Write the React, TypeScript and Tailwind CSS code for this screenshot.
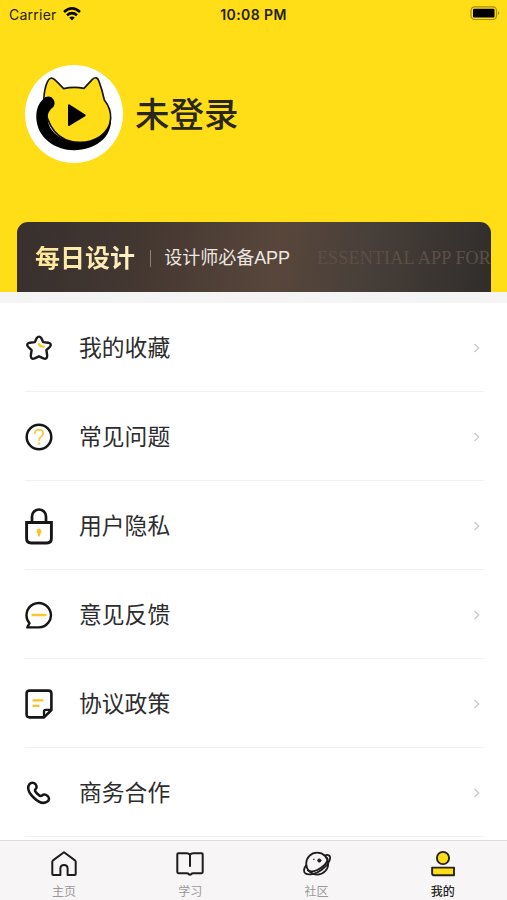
import type { ReactNode } from "react"

type Row = {
    label: string
    icon: ReactNode
}

type Tab = {
    label: string
    icon: ReactNode
    active?: boolean
}

const rows: Row[] = [
    { label: "我的收藏", icon: <StarIcon /> },
    { label: "常见问题", icon: <QuestionIcon /> },
    { label: "用户隐私", icon: <LockIcon /> },
    { label: "意见反馈", icon: <FeedbackIcon /> },
    { label: "协议政策", icon: <NoteIcon /> },
    { label: "商务合作", icon: <PhoneIcon /> }
]

const tabs: Tab[] = [
    { label: "主页", icon: <HomeIcon /> },
    { label: "学习", icon: <BookIcon /> },
    { label: "社区", icon: <PlanetIcon /> },
    { label: "我的", icon: <UserIcon />, active: true }
]

function StarIcon() {
    return (
        <svg width="28" height="28" viewBox="0 0 28 28" fill="none" strokeLinejoin="round" strokeLinecap="round">
            <path
                d="M11.6 4.3Q14 .9 16.4 4.3L18.1 8.1L23.2 8.7Q27.6 9.7 24.7 13L21.4 16.2L22.2 21.5Q22.2 25.8 18.4 24.3L14 22.3L9.6 24.3Q5.8 25.8 5.8 21.5L6.6 16.2L3.3 13Q.4 9.7 4.8 8.7L9.9 8.1Z"
                stroke="#1b1b1b"
                strokeWidth="2.4"
            />
            <path d="M13.8 10Q15.2 13 18.8 12.6" stroke="#ffc921" strokeWidth="2.3" />
        </svg>
    )
}

function QuestionIcon() {
    return (
        <svg width="28" height="28" viewBox="0 0 28 28" fill="none" strokeLinecap="round">
            <circle cx="14" cy="14" r="12.3" stroke="#161616" strokeWidth="2.5" />
            <path d="M9.8 10.5Q10.1 6.7 14 6.7Q18.2 6.9 18.2 10.5Q18.2 12.4 15.7 14Q14 15.3 14 17.3" stroke="#ffc83a" strokeWidth="1.7" />
            <circle cx="14" cy="20.6" r="1.2" fill="#ffc83a" />
        </svg>
    )
}

function LockIcon() {
    return (
        <svg width="28" height="38" viewBox="0 0 28 38" fill="none">
            <path d="M7 15V9.5A7 7 0 0 1 21 9.5V15" stroke="#161616" strokeWidth="2.7" />
            <path d="M1.6 15.5H26.4V31.5Q26.4 36 21.9 36H6.1Q1.6 36 1.6 31.5Z" stroke="#161616" strokeWidth="2.9" />
            <path d="M14 21.8A2.6 2.6 0 0 1 15.4 26.5L14.7 29.5H13.3L12.6 26.5A2.6 2.6 0 0 1 14 21.8Z" fill="#ffc31d" />
        </svg>
    )
}

function FeedbackIcon() {
    return (
        <svg width="28" height="28" viewBox="0 0 28 28" fill="none" strokeLinejoin="round">
            <path d="M14 26.4H2.3L4.5 22.2A12.2 12.2 0 1 1 14 26.4Z" stroke="#161616" strokeWidth="2.4" />
            <path d="M7.5 14H20.5" stroke="#ffc62b" strokeWidth="2.3" strokeLinecap="round" />
        </svg>
    )
}

function NoteIcon() {
    return (
        <svg width="28" height="30" viewBox="0 0 28 30" fill="none" strokeLinejoin="round">
            <path d="M19 28.4H4.5Q1.6 28.4 1.6 25.5V4.5Q1.6 1.6 4.5 1.6H23.5Q26.4 1.6 26.4 4.5V21Z" stroke="#161616" strokeWidth="2.6" />
            <path d="M19 27.5V22.5Q19 20.8 20.7 20.8H26" stroke="#161616" strokeWidth="2.3" />
            <path d="M7.5 11.3H18.5M7.5 16.8H14.5" stroke="#ffc31d" strokeWidth="2.3" />
        </svg>
    )
}

function PhoneIcon() {
    return (
        <svg width="28" height="28" viewBox="0 0 28 28" fill="none" strokeLinejoin="round">
            <path
                d="M4.4 5.2C5.9 3.3 8.8 3.2 10.4 5.1C12 7.2 11.8 8.9 10.6 10.1C9.4 11.3 10 12.5 12 14.5C14 16.5 15.6 17.7 16.9 16.5C18.4 15.2 20.8 15.3 22.7 17.1C24.6 18.9 24.2 21.3 22.4 22.5C18.4 25.3 12.9 22.8 8.6 18.5C4.3 14.2 1.7 9 4.4 5.2Z"
                stroke="#161616"
                strokeWidth="2.5"
            />
        </svg>
    )
}

function HomeIcon() {
    return (
        <svg width="28" height="28" viewBox="0 0 28 28" fill="none" strokeLinejoin="round">
            <path
                d="M2.3 12Q2.3 11 3 10.4L14 2.3L25 10.4Q25.7 11 25.7 12V24.1Q25.7 25 24.8 25H17.6V18.5Q17.6 14.9 14 14.9Q10.4 14.9 10.4 18.5V25H3.2Q2.3 25 2.3 24.1Z"
                stroke="#1d1d1d"
                strokeWidth="2"
            />
        </svg>
    )
}

function BookIcon() {
    return (
        <svg width="28" height="28" viewBox="0 0 28 28" fill="none" strokeLinejoin="round">
            <path
                d="M14 16V4.8Q12.8 3.2 10.8 3.2H2.4Q1.3 3.2 1.3 4.3V22.1Q1.3 23.2 2.4 23.2H11Q12.2 23.2 12.6 24.1Q14 25.2 15.4 24.1Q15.8 23.2 17 23.2H25.6Q26.7 23.2 26.7 22.1V4.3Q26.7 3.2 25.6 3.2H17.2Q15.2 3.2 14 4.8"
                stroke="#1d1d1d"
                strokeWidth="2"
                strokeLinecap="round"
            />
        </svg>
    )
}

function PlanetIcon() {
    return (
        <svg width="28" height="28" viewBox="0 0 28 28" fill="none" stroke="#1d1d1d" strokeWidth="1.8" strokeLinecap="round">
            <circle cx="14.2" cy="13.7" r="11" />
            <path d="M21.8 5.3C25 4.3 27.6 5.5 27.1 8.5C26.7 12 23.5 16.2 18.8 19.8C13.2 24 5.2 25.7 2.2 23.2C.2 21.4 1 17.7 3.2 15.4" />
            <path d="M23.4 7.6Q25.3 8.7 24 11.5C22.2 15.3 18.6 18 14.2 20C10.2 21.9 7.2 22.2 4.8 20.2" />
            <circle cx="16.3" cy="10.5" r="1.6" fill="#1d1d1d" strokeWidth="1" />
            <circle cx="10.8" cy="9.3" r=".4" fill="#1d1d1d" strokeWidth=".5" />
        </svg>
    )
}

function UserIcon() {
    return (
        <svg width="28" height="28" viewBox="0 0 28 28" fill="#ffdd17" stroke="#252318" strokeWidth="1.9" strokeLinejoin="round">
            <circle cx="14" cy="8" r="6.1" />
            <path d="M3.1 17.6H25V25.2H4.8Q3.1 25.2 3.1 23.5Z" />
        </svg>
    )
}

function CatLogo() {
    return (
        <svg width="98" height="98" viewBox="30 16 294 294" strokeLinejoin="round">
            <circle cx="177" cy="163" r="147" fill="#fff" />
            <path
                d="M86 122Q88 84 98 65Q106 49 119 60Q132 72 146 87Q176 80 207 86L232 59Q246 47 252 65Q261 88 268 121Q288 146 287 176C284 225 235 249 192 248C140 247 96 218 86 122Z"
                fill="#ffdd17"
                stroke="#161616"
                strokeWidth="5"
            />
            {/* the tail wraps round the face and ends in a round tip */}
            <path
                d="M86 117C70 130 63 151 64 176C67 236 122 272 177 272C242 271 291 234 288 176C284 225 235 249 192 248C140 246 98 216 98 174Q98 158 110 146A19 19 0 1 0 86 117Z"
                fill="#000"
            />
            <path d="M162 137L209 167L162 196Z" fill="#000" stroke="#000" strokeWidth="6" />
        </svg>
    )
}

function StatusBar() {
    return (
        <div className="grid h-7 grid-cols-3 items-center pl-[9px] pr-[7px] text-[14px] text-[#24210b]">
            <div className="flex items-center gap-[6px] tracking-[0.25px]">
                Carrier
                <svg width="18" height="14" viewBox="0 0 18 14" fill="none" stroke="#090800" strokeWidth="2.6">
                    <path d="M1 4.9Q9-2.1 17 4.9M4 8.2Q9 4 14 8.2" />
                    <path d="M6.2 10.6Q9 8.2 11.8 10.6L9 13.5Z" fill="#090800" stroke="none" />
                </svg>
            </div>

            <div className="-ml-[2px] whitespace-nowrap text-center font-semibold tracking-[0.4px]">
                10:08 PM
            </div>

            <svg className="-mt-[2px] justify-self-end" width="30" height="14" viewBox="0 0 30 14">
                <rect x="1" y=".8" width="25.5" height="12.7" rx="3.7" fill="none" stroke="#a49013" strokeWidth="1.2" />
                <rect x="3" y="2.8" width="21.5" height="8.7" rx="1.2" fill="#000" />
                <path d="M28 5Q30.5 7 28 9Z" fill="#a49013" />
            </svg>
        </div>
    )
}

function Banner() {
    return (
        <div className="ml-[17px] mr-4 mt-auto flex h-[70px] items-center overflow-hidden whitespace-nowrap rounded-t-[11px] bg-[linear-gradient(100deg,#37302e_0%,#433731_25%,#58463b_55%,#49403a_72%,#302d2b_100%)] pl-[18px] pt-[2px]">
            <span className="bg-linear-to-r from-[#ffe796] to-[#fff0c5] bg-clip-text text-[25px] font-bold leading-none text-transparent">
                每日设计
            </span>
            <span className="ml-[15px] h-[17px] w-px bg-[#8c8079]" />
            <span className="ml-[14px] text-[18px] leading-none text-[#eee7e1]">
                设计师必备<span className="font-['Liberation_Sans'] tracking-[-0.1px]">APP</span>
            </span>
            <span className="ml-[27px] font-['Liberation_Serif'] text-[18px] leading-none tracking-[0.2px] text-[#5d4f46]">
                ESSENTIAL APP FOR
            </span>
        </div>
    )
}

export default function App() {
    return (
        <div className="flex h-[900px] w-[507px] flex-col overflow-hidden bg-white font-[Inter,'Noto_Sans_CJK_SC',sans-serif]">
            <header className="flex h-[292px] shrink-0 flex-col bg-[#ffdd17]">
                <StatusBar />
                <div className="mt-[37px] flex items-center gap-3 pl-[25px]">
                    <CatLogo />
                    <h1 className="pt-[3px] text-[34.5px] font-medium leading-none text-[#29261a]">
                        未登录
                    </h1>
                </div>
                <Banner />
            </header>

            <main className="min-h-0 flex-1 overflow-hidden border-t-[11px] border-[#f4f4f4]">
                {rows.map((row) => (
                    <div
                        key={row.label}
                        className="ml-[25px] mr-[23px] flex h-[89px] items-center border-b border-[#f0f0f0] pt-px"
                    >
                        <span className="flex w-7 justify-center">{row.icon}</span>
                        <span className="ml-[26px] flex-1 pt-[2px] text-[22.8px] leading-none text-[#2d2d2d]">
                            {row.label}
                        </span>
                        <svg width="8" height="12" viewBox="0 0 8 12" className="mr-[3px]" fill="none">
                            <path d="M1.5 2L5.7 6L1.5 10" stroke="#c9c9c9" strokeWidth="1.3" />
                        </svg>
                    </div>
                ))}
            </main>

            <nav className="grid h-[60px] shrink-0 grid-cols-4 border-t border-[#dcdcdc] bg-[#f7f5f6] px-px">
                {tabs.map((tab) => (
                    <div key={tab.label} className="flex flex-col items-center pt-[9px]">
                        {tab.icon}
                        <span
                            className={`mt-2 text-[12px] leading-none ${
                                tab.active ? "font-medium text-[#252525]" : "text-[#999999]"
                            }`}
                        >
                            {tab.label}
                        </span>
                    </div>
                ))}
            </nav>
        </div>
    )
}
